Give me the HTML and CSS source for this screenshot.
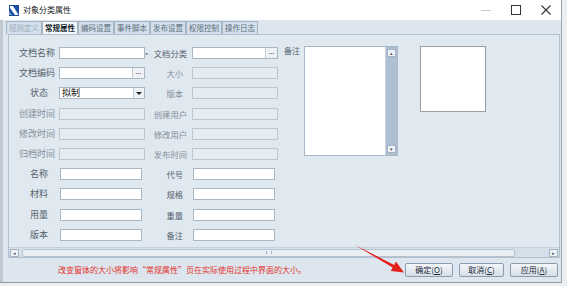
FILE: index.html
```html
<!DOCTYPE html>
<html lang="zh-CN">
<head>
    <meta charset="UTF-8">
    <title>对象分类属性</title>
    <link rel="stylesheet" href="styles.css">
</head>
<body>
    <div class="window">
        <div class="titlebar">
            <svg class="app-icon" width="10" height="11" viewBox="0 0 10 11">
                <rect width="10" height="11" fill="#1d4f9e"/>
                <polygon points="1,1 4,1 9,9 9,10 6,10 1,3" fill="#ffffff"/>
                <polygon points="0,6 3,10 0,10" fill="#6f9be0"/>
            </svg>
            <span class="title">对象分类属性</span>
            <div class="controls">
                <span class="ctl"><span class="min"></span></span>
                <span class="ctl"><span class="max"></span></span>
                <span class="ctl">
                    <svg width="10" height="10" viewBox="0 0 10 10"><path d="M0.5 0.5 L9.5 9.5 M9.5 0.5 L0.5 9.5" stroke="#333" stroke-width="1.1"/></svg>
                </span>
            </div>
        </div>

        <div class="frame">
            <div class="tabs">
                <div class="tab off">规则定义</div>
                <div class="tab active">常规属性</div>
                <div class="tab">编码设置</div>
                <div class="tab">事件脚本</div>
                <div class="tab">发布设置</div>
                <div class="tab">权限控制</div>
                <div class="tab">操作日志</div>
            </div>

            <div class="panel">
                <div class="content">
                    <div class="form">
                        <label>文档名称</label>
                        <div class="field"></div>
                        <label class="rt"><span class="dot">•</span>文档分类</label>
                        <div class="field"><span class="more">...</span></div>

                        <label>文档编码</label>
                        <div class="field"><span class="more">...</span></div>
                        <label class="rt short dim">大小</label>
                        <div class="field disabled"></div>

                        <label class="short">状态</label>
                        <div class="field select"><span class="value">拟制</span><span class="drop"></span></div>
                        <label class="rt short dim">版本</label>
                        <div class="field disabled"></div>

                        <label class="dim">创建时间</label>
                        <div class="field disabled"></div>
                        <label class="rt dim">创建用户</label>
                        <div class="field disabled"></div>

                        <label class="dim">修改时间</label>
                        <div class="field disabled"></div>
                        <label class="rt dim">修改用户</label>
                        <div class="field disabled"></div>

                        <label class="dim">归档时间</label>
                        <div class="field disabled"></div>
                        <label class="rt dim">发布时间</label>
                        <div class="field disabled"></div>

                        <label class="short">名称</label>
                        <div class="field plain"></div>
                        <label class="rt short">代号</label>
                        <div class="field plain"></div>

                        <label class="short">材料</label>
                        <div class="field plain"></div>
                        <label class="rt short">规格</label>
                        <div class="field plain"></div>

                        <label class="short">用量</label>
                        <div class="field plain"></div>
                        <label class="rt short">重量</label>
                        <div class="field plain"></div>

                        <label class="short">版本</label>
                        <div class="field plain"></div>
                        <label class="rt short">备注</label>
                        <div class="field plain"></div>
                    </div>

                    <div class="notes">
                        <span class="notes-label">备注</span>
                        <div class="memo">
                            <span class="sbtn">&#9652;</span>
                            <span class="sbtn">&#9662;</span>
                        </div>
                    </div>

                    <div class="picture"></div>
                </div>

                <div class="hscroll">
                    <span class="sbtn">&#9666;</span>
                    <div class="thumb"><span class="grip"></span></div>
                    <span class="sbtn right">&#9656;</span>
                </div>
            </div>

            <div class="footer">
                <span class="hint">改变窗体的大小将影响“常规属性”页在实际使用过程中界面的大小。</span>
                <div class="buttons">
                    <button class="btn">确定(<u>O</u>)</button>
                    <button class="btn cancel">取消(<u>C</u>)</button>
                    <button class="btn">应用(<u>A</u>)</button>
                </div>
            </div>
        </div>
    </div>

    <svg class="pointer" width="567" height="286" viewBox="0 0 567 286">
        <polygon points="355,245 394.2,265 395.9,261.6 404,272.5 390.8,271 392.6,267.6" fill="#e4201c"/>
    </svg>
</body>
</html>
```

FILE: styles.css
```css
body {
    margin: 0;
    width: 567px;
    height: 286px;
    overflow: hidden;
    background-color: #eceef0;
    font-family: "Noto Sans CJK SC", "Liberation Sans", sans-serif;
    font-size: 9px;
    color: #2f3d4a;
}

.window {
    width: 562px;
    height: 283px;
    display: flex;
    flex-direction: column;
    background-color: #dfe7ef;
    border-right: 1px solid #9aa4ad;
    border-bottom: 1px solid #8f9aa4;
    box-sizing: border-box;
}

/* title bar */
.titlebar {
    height: 20px;
    background-color: #fff;
    display: flex;
    align-items: center;
    padding-left: 9px;
}

.title {
    margin-left: 4px;
    color: #222;
    font-size: 8px;
    line-height: 12px;
}

.controls {
    margin-left: auto;
    display: flex;
    height: 20px;
}

.ctl {
    width: 30px;
    display: flex;
    align-items: center;
    justify-content: center;
}

.min {
    width: 10px;
    border-top: 1px solid #c9c9c9;
}

.max {
    width: 8px;
    height: 8px;
    border: 1px solid #333;
}

/* frame under title */
.frame {
    flex: 1;
    display: flex;
    flex-direction: column;
    border-left: 3px solid #c2c9d0;
    background-color: #dde6ee;
}

.tabs {
    display: flex;
    height: 13px;
    margin-top: 1px;
    padding-left: 3px;
}

.tab {
    width: 36px;
    height: 13px;
    box-sizing: border-box;
    border: 1px solid #a5b5c4;
    border-bottom: none;
    background-color: #d3dfea;
    color: #5d6f80;
    font-size: 7.5px;
    line-height: 12px;
    text-align: center;
    white-space: nowrap;
}

.tab.off {
    color: #9aabbb;
}

.tab.active {
    background-color: #f5f8fb;
    color: #111c26;
    font-weight: bold;
    height: 14px;
}

/* main panel */
.panel {
    margin-left: 5px;
    width: 552px;
    height: 224px;
    box-sizing: border-box;
    border: 1px solid #b2c0cd;
    display: flex;
    flex-direction: column;
    background-color: #e0e8f0;
}

.content {
    height: 212px;
    display: flex;
    align-items: flex-start;
    padding-top: 11px;
    box-sizing: border-box;
}

.form {
    margin-top: 1px;
    display: grid;
    grid-template-columns: 46px 86px 39px 86px;
    grid-auto-rows: 12px;
    column-gap: 4px;
    row-gap: 8.2px;
}

.form label {
    display: flex;
    justify-content: flex-end;
    line-height: 12px;
    white-space: nowrap;
    color: #56636f;
}

.form label.rt {
    font-size: 8.3px;
    padding-right: 1px;
}

.form label.short {
    padding-right: 7px;
}

.form label.rt.short {
    padding-right: 5px;
}

.form label.dim {
    color: #848f99;
}

.dot {
    margin-right: 3px;
}

.field {
    position: relative;
    height: 12px;
    box-sizing: border-box;
    border: 1px solid #a9b7c5;
    background-color: #fff;
}

.field.plain {
    margin: 0 3px 0 1px;
}

.field.disabled {
    background-color: #e4ebf1;
    border-color: #bac6d0;
}

.more {
    position: absolute;
    right: 0;
    top: 0;
    width: 11px;
    height: 10px;
    border-left: 1px solid #c3ccd5;
    background-color: #eef2f6;
    font-size: 7px;
    line-height: 6px;
    text-align: center;
    color: #333;
}

.select {
    display: flex;
    align-items: center;
}

.select .value {
    padding-left: 2px;
    line-height: 10px;
    color: #111;
}

.drop {
    position: absolute;
    right: 0;
    top: 0;
    width: 10px;
    height: 10px;
    background-color: #eef2f6;
    border-left: 1px solid #c3ccd5;
}

.drop::after {
    content: "";
    position: absolute;
    left: 2px;
    top: 4px;
    border-left: 3px solid transparent;
    border-right: 3px solid transparent;
    border-top: 3px solid #222;
}

/* notes + picture */
.notes {
    display: flex;
    margin-left: 6px;
}

.notes-label {
    font-size: 8px;
    line-height: 10px;
    color: #56636f;
}

/* the memo's vertical scrollbar trough is its right 12px */
.memo {
    margin-left: 4px;
    width: 94px;
    height: 110px;
    box-sizing: border-box;
    border: 1px solid #a9b8c6;
    background: linear-gradient(to left, #adc0d2 11px, #c9d5e0 11px, #c9d5e0 12px, #fff 12px);
    display: flex;
    flex-direction: column;
    justify-content: space-between;
    align-items: flex-end;
    padding: 2px 1px 2px 0;
}

.sbtn {
    width: 9px;
    height: 8px;
    box-sizing: border-box;
    border: 1px solid #a4b4c4;
    background-color: #edf2f7;
    font-size: 5px;
    line-height: 6px;
    text-align: center;
    color: #555;
}

.picture {
    margin-left: 22px;
    width: 66px;
    height: 66px;
    box-sizing: border-box;
    border: 1px solid #9a9ea3;
    background-color: #fff;
}

/* horizontal scroll */
.hscroll {
    height: 10px;
    display: flex;
    align-items: center;
    padding: 0 1px;
    background-color: #d6e0e9;
    border-top: 1px solid #c5d1dc;
    box-sizing: border-box;
}

.thumb {
    margin-left: 3px;
    width: 493px;
    height: 8px;
    box-sizing: border-box;
    border: 1px solid #b3c2d0;
    border-radius: 2px;
    background-color: #e9eff5;
    display: flex;
    justify-content: center;
    align-items: center;
}

.grip {
    width: 4px;
    height: 3px;
    border-left: 1px solid #aab;
    border-right: 1px solid #aab;
}

.hscroll .right {
    margin-left: auto;
}

/* footer */
.footer {
    flex: 1;
    display: flex;
    align-items: center;
    padding-left: 55px;
    padding-right: 3px;
}

.hint {
    color: #e3302a;
    font-size: 8px;
    line-height: 12px;
}

.buttons {
    margin-left: auto;
    display: flex;
    gap: 6px;
}

.btn {
    height: 14px;
    width: 48px;
    padding: 0;
    font-family: "Noto Sans CJK SC", "Liberation Sans", sans-serif;
    font-size: 8px;
    line-height: 12px;
    color: #1d2935;
    border: 1px solid #8c9cac;
    border-radius: 2px;
    background: linear-gradient(#f4f7fa, #d5dee7);
}

.btn.cancel {
    width: 45px;
}

.pointer {
    position: absolute;
    left: 0;
    top: 0;
    pointer-events: none;
}
```
